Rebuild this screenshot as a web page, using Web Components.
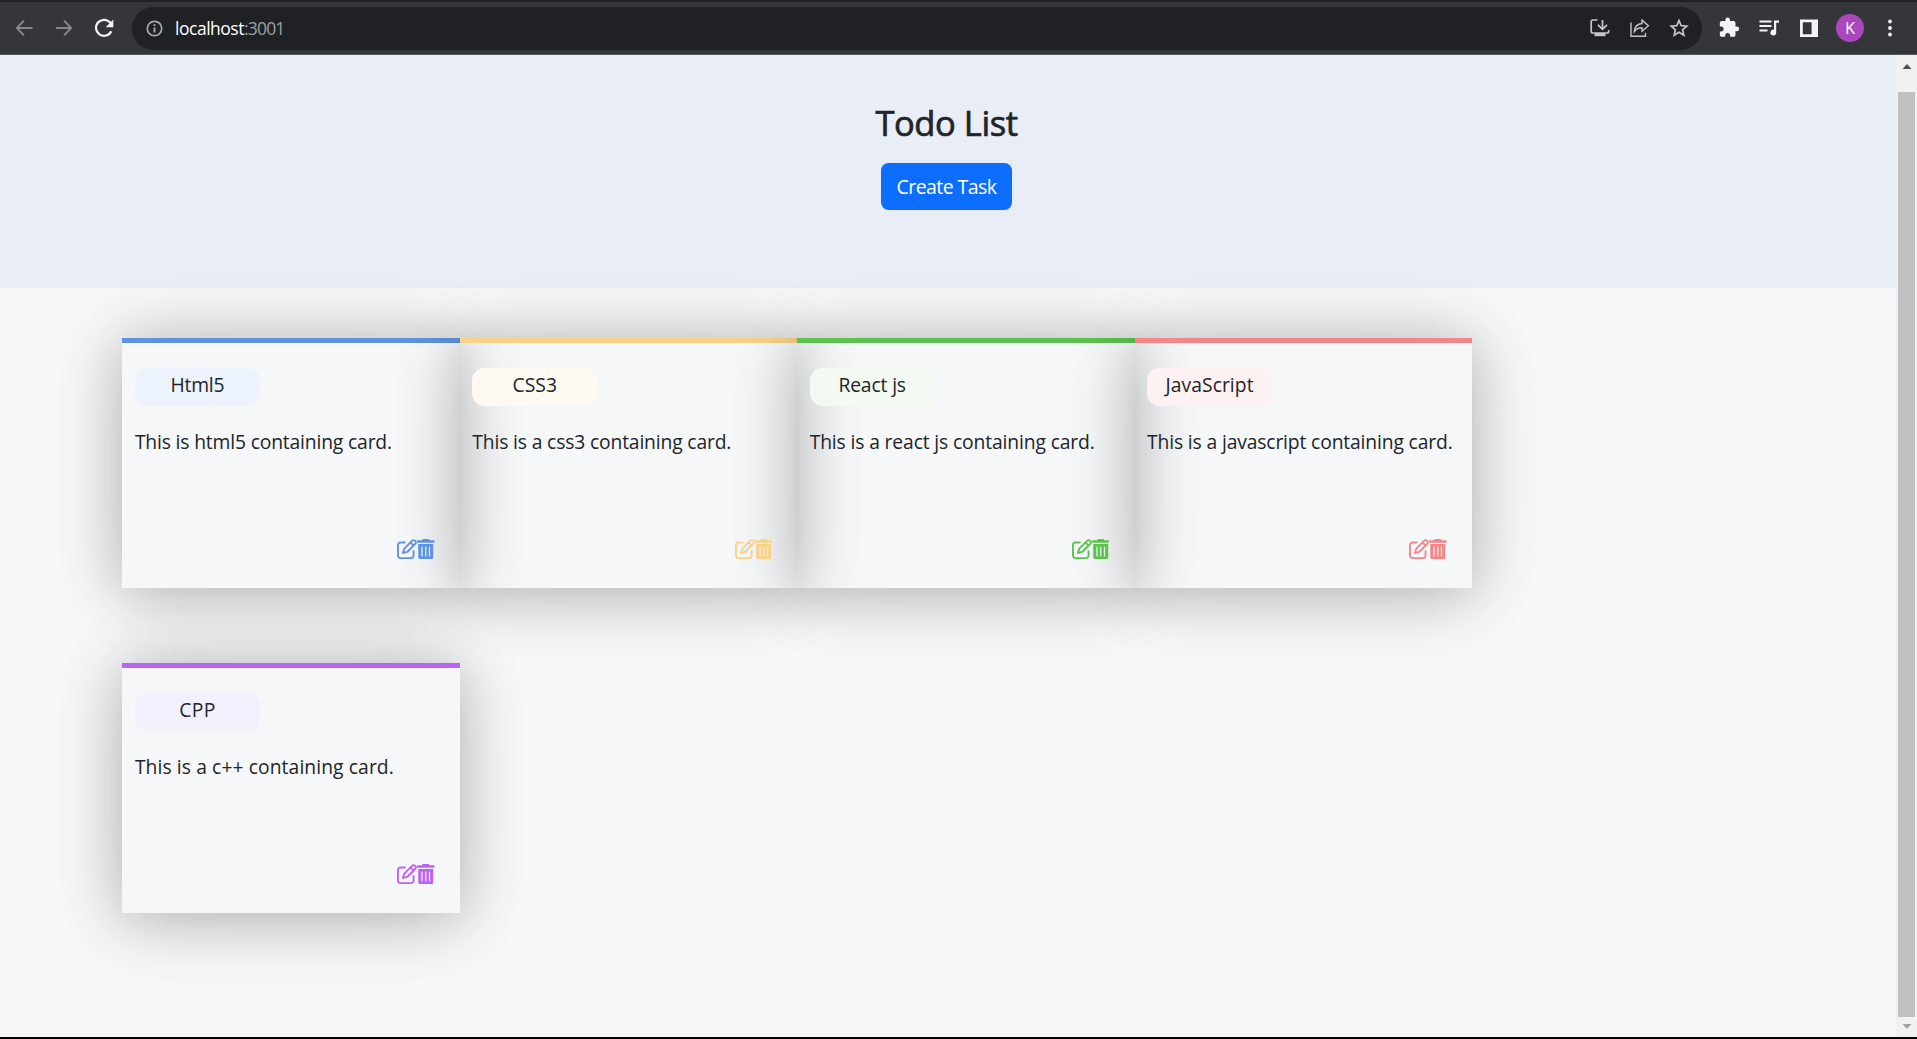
<!DOCTYPE html>
<html lang="en">
<head>
<meta charset="utf-8">
<title>Todo List</title>
<style>
html,body{margin:0;height:100%;overflow:hidden;background:#000}
body{font-family:"Open Sans","Noto Sans",sans-serif;color:#212529}
</style>
</head>
<body>
<todo-window></todo-window>
<script>
const define=(name,html,setup)=>customElements.define(name,class extends HTMLElement{
  constructor(){
    super();
    this.attachShadow({mode:'open'}).innerHTML=html;
  }
  connectedCallback(){ if(setup) setup(this,this.shadowRoot); }
});

/* One line of text whose tracking is adjusted to a given advance width. */
define('fit-text',`<style>:host{display:inline-block;white-space:nowrap}span{display:inline-block}</style><span><slot></slot></span>`,(el,root)=>{
  const s=root.querySelector('span'),n=el.textContent.length,w=+el.getAttribute('w');
  const now=s.getBoundingClientRect().width;
  if(w&&now) s.style.letterSpacing=((w-now)/n).toFixed(4)+'px';
});

define('browser-bar',`
<style>
:host{display:flex;align-items:center;box-sizing:border-box;height:55px;background:#35363a;border-top:2px solid #202124;border-bottom:1px solid #58595c;flex:none}
svg{display:block;flex:none}
.nav{display:flex;align-items:center;gap:16px;padding-left:12px;width:120px;box-sizing:content-box}
.omni{display:flex;align-items:center;box-sizing:border-box;width:1570px;height:43px;border-radius:22px;background:#202124;padding:0 11px 0 10px;color:#fff;font-size:17.5px;line-height:43px}
.omni fit-text{margin-left:8px}
.omni .port{color:#9aa0a6;margin-left:0}
.acts{display:flex;gap:16px;margin-left:auto;color:#c4c4c4}
.tools{display:flex;align-items:center;gap:16px;padding-left:15px;color:#f1f3f4}
.who{display:flex;align-items:center;justify-content:center;width:28px;height:28px;border-radius:50%;background:#ab47bc;color:#fff;font-size:16.500px;line-height:28px;margin:0 -2px 0 -1px}
</style>
<div class="nav">
<svg width="24" height="24" viewBox="0 0 24 24" fill="none" stroke="#87888b" stroke-width="1.9"><path d="M20.5 12H5M12 4.7 4.8 12l7.2 7.3"/></svg>
<svg width="24" height="24" viewBox="0 0 24 24" fill="none" stroke="#87888b" stroke-width="1.9"><path d="M4 12h15M12 4.7l7.2 7.3-7.2 7.3"/></svg>
<svg width="24" height="24" viewBox="0 0 24 24"><path d="M18.6 7.2A8 8 0 1 0 19.3 15.200" fill="none" stroke="#f1f3f4" stroke-width="2.2"/><path d="M21.300 3.600v7.600h-7.600z" fill="#f1f3f4"/></svg>
</div>
<div class="omni">
<svg width="25" height="25" viewBox="0 0 25 25" fill="none" stroke="#a5a9ad" stroke-width="1.7"><circle cx="12.500" cy="12.500" r="7.200"/><path d="M12.500 11.500v5M12.500 8.200v1.800" stroke-width="1.900"/></svg>
<fit-text w="69">localhost</fit-text><fit-text class="port" w="40.500">:3001</fit-text>
<div class="acts">
<svg width="24" height="24" viewBox="0 0 24 24" fill="none" stroke="currentColor" stroke-width="1.7"><path d="M10.500 4H6q-1.800 0-1.800 1.800v9.400Q4.200 17 6 17h14q1.700 0 1.700-1.800V14"/><path d="M15.500 4v8.500M11 8.800l4.500 4.500L20 8.800" stroke-width="1.800"/><path d="M7.500 17h11v3.200h-11z" fill="currentColor" stroke="none"/></svg>
<svg width="24" height="24" viewBox="0 0 24 24" fill="none" stroke="currentColor" stroke-width="1.400"><path d="M4 6.500v13.800h14.500v-3.500"/><path d="M7.300 15.500c.4-5 3.200-7.600 7.700-8V4.100l6.400 5.600-6.400 5.600v-3.500c-3.500 0-5.900 1.100-7.700 3.700z"/></svg>
<svg width="24" height="24" viewBox="0 0 24 24" fill="none" stroke="currentColor" stroke-width="1.700"><path d="M12 4.500l2.200 5.100 5.600.5-4.200 3.700 1.200 5.400-4.800-2.900-4.800 2.900 1.200-5.400-4.200-3.700 5.600-.5z"/></svg>
</div>
</div>
<div class="tools">
<svg width="24" height="24" viewBox="0 0 24 24" fill="currentColor"><path transform="translate(1 .5) scale(.92)" d="M20.500 11H19V7c0-1.100-.9-2-2-2h-4V3.500a2.500 2.500 0 0 0-5 0V5H4c-1.100 0-2 .9-2 2v3.800h1.500c1.490 0 2.700 1.210 2.700 2.700s-1.210 2.700-2.700 2.700H2V20c0 1.100.9 2 2 2h3.800v-1.500c0-1.490 1.210-2.700 2.700-2.700s2.700 1.210 2.700 2.700V22H17c1.100 0 2-.9 2-2v-4h1.500a2.500 2.500 0 0 0 0-5z"/></svg>
<svg width="24" height="24" viewBox="0 0 24 24" fill="currentColor"><path d="M2.500 4.500h12v2h-12zM2.500 9h12v2h-12zM2.500 13.500h8v2h-8zM17 4.500h5v2.200h-2.800v9.800a2.900 2.900 0 1 1-2.200-2.800z"/></svg>
<svg width="24" height="24" viewBox="0 0 24 24"><path fill="currentColor" fill-rule="evenodd" d="M3 3.500h18v17.500H3zM5.800 6.300v12h8.800v-12z"/></svg>
<div class="who">K</div>
<svg width="24" height="24" viewBox="0 0 24 24" fill="currentColor"><circle cx="12" cy="5.500" r="1.900"/><circle cx="12" cy="12" r="1.900"/><circle cx="12" cy="18.500" r="1.900"/></svg>
</div>`);

define('scroll-track',`
<style>
:host{display:flex;flex-direction:column;align-items:center;width:21px;flex:none;background:#f1f1f1}
i{height:37px;display:flex;flex:none}
i:last-child{height:20px}
b{flex:1;width:17px;background:#c1c1c1}
svg{display:block;width:10px;height:37px}
i:last-child svg{height:20px}
</style>
<i><svg viewBox="0 0 10 37"><path d="M0.500 14 5 9l4.500 5z" fill="#505050"/></svg></i><b></b>
<i><svg viewBox="0 0 10 20"><path d="M.5 7h9L5 12z" fill="#a3a3a3"/></svg></i>`);

define('todo-header',`
<style>
:host{display:flex;flex-direction:column;align-items:center;box-sizing:border-box;height:233px;padding:42px 3px 0 0;background:#e8edf6}
h3{margin:0;font-size:34.500px;line-height:52px;font-weight:400;-webkit-text-stroke:.7px currentColor;height:52px}
button{margin:14px 0 0;box-sizing:border-box;width:131px;height:47px;padding:0;border:0;border-radius:7.500px;background:#0d6efd;color:#fff;font:400 19.500px/47px "Open Sans","Noto Sans",sans-serif}
</style>
<h3><fit-text w="142">Todo List</fit-text></h3>
<button><fit-text w="100">Create Task</fit-text></button>`);

define('todo-card',`
<style>
:host{display:flex;flex-direction:column;box-sizing:border-box;width:337.400px;height:250px;border-top:5px solid var(--main);padding:25px 25.100px 29.500px 12.500px;box-shadow:0 5px 56px rgba(6,12,0,.27),0 5px 90px rgba(6,12,0,.06);font-size:19.300px}
.pill{width:125px;height:38px;border-radius:12.500px;background:var(--soft);text-align:center;line-height:34px}
p{margin:21px 0 0;line-height:30px;white-space:nowrap}
/* Raised so the neighbouring card's shadow does not dim the icons. */
.icons{position:relative;display:flex;justify-content:flex-end;margin-top:auto;color:var(--main)}
svg{display:block;height:20px;fill:currentColor}
</style>
<div class="pill"><slot name="title"></slot></div>
<p><slot></slot></p>
<div class="icons">
<svg width="20" viewBox="0 0 512 512" style="overflow:visible"><path d="M441 58.900L453.100 71c9.400 9.400 9.400 24.600 0 33.900L424 134.100 377.900 88 407 58.900c9.400-9.400 24.600-9.400 33.900 0zM209.800 256.200L344 121.900 390.100 168 255.800 302.200c-2.900 2.900-6.500 5-10.400 6.100l-58.500 16.700 16.700-58.500c1.100-3.900 3.200-7.500 6.100-10.400zM373.100 25L175.800 222.200c-8.700 8.700-15 19.400-18.300 31.100l-28.600 100c-2.400 8.400-.1 17.400 6.100 23.600s15.200 8.500 23.600 6.100l100-28.600c11.800-3.400 22.500-9.700 31.100-18.300L487 138.900c28.100-28.100 28.100-73.700 0-101.800L474.900 25C446.800-3.100 401.200-3.100 373.100 25zM88 64C39.400 64 0 103.400 0 152V424c0 48.600 39.400 88 88 88H360c48.600 0 88-39.400 88-88V312c0-13.300-10.700-24-24-24s-24 10.700-24 24V424c0 22.100-17.900 40-40 40H88c-22.100 0-40-17.900-40-40V152c0-22.100 17.900-40 40-40H200c13.300 0 24-10.700 24-24s-10.700-24-24-24H88z"/></svg>
<svg width="17.500" viewBox="0 0 448 512"><path d="M32 464a48 48 0 0 0 48 48h288a48 48 0 0 0 48-48V128H32zm272-256a16 16 0 0 1 32 0v224a16 16 0 0 1-32 0zm-96 0a16 16 0 0 1 32 0v224a16 16 0 0 1-32 0zm-96 0a16 16 0 0 1 32 0v224a16 16 0 0 1-32 0zM432 32H320L308.400 8.800A16 16 0 0 0 294.100 0H153.900a16 16 0 0 0-14.300 8.800L128 32H16A16 16 0 0 0 0 48v32a16 16 0 0 0 16 16h416a16 16 0 0 0 16-16V48a16 16 0 0 0-16-16z"/></svg>
</div>`);

define('todo-window',`
<style>
:host{display:flex;flex-direction:column;height:1037px;width:1917px;overflow:hidden}
.view{display:flex;flex:1;min-height:0}
main{flex:1;background:#f6f7f9;overflow:hidden}
.cards{display:flex;flex-wrap:wrap;row-gap:75px;padding:50px 300px 0 122.400px}
</style>
<browser-bar></browser-bar>
<div class="view">
<main>
<todo-header></todo-header>
<div class="cards">
<todo-card style="--main:#5d93e1;--soft:#ecf3fc"><fit-text slot="title" w="54">Html5</fit-text><fit-text w="257">This is html5 containing card.</fit-text></todo-card>
<todo-card style="--main:#f9d288;--soft:#fefaf1"><fit-text slot="title" w="44.500">CSS3</fit-text><fit-text w="259">This is a css3 containing card.</fit-text></todo-card>
<todo-card style="--main:#5dc250;--soft:#f2faf1"><fit-text slot="title" w="67.500">React js</fit-text><fit-text w="285">This is a react js containing card.</fit-text></todo-card>
<todo-card style="--main:#f48687;--soft:#fdf1f1"><fit-text slot="title" w="88">JavaScript</fit-text><fit-text w="305.500">This is a javascript containing card.</fit-text></todo-card>
<todo-card style="--main:#b964f7;--soft:#f3f0fd"><fit-text slot="title" w="36.500">CPP</fit-text><fit-text w="259">This is a c++ containing card.</fit-text></todo-card>
</div>
</main>
<scroll-track></scroll-track>
</div>`);
</script>
</body>
</html>
